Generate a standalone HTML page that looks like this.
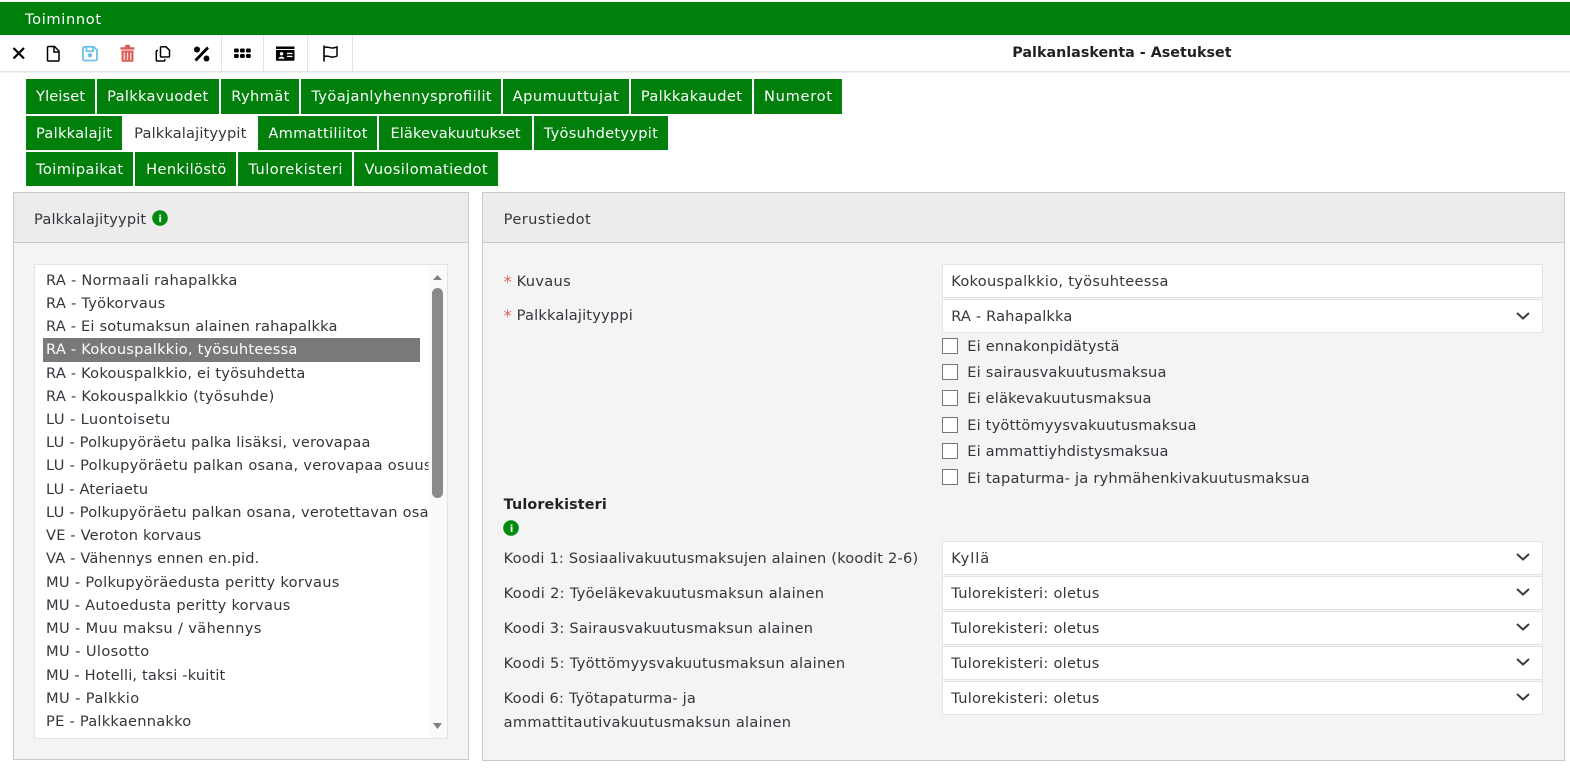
<!DOCTYPE html>
<html lang="fi"><head><meta charset="utf-8"><title>Palkanlaskenta - Asetukset</title>
<style>
html,body{margin:0;padding:0;background:#fff;width:1570px;height:772px;overflow:hidden}
svg{display:block}
text{font-family:"DejaVu Sans","Liberation Sans",sans-serif;font-size:14.600px;fill:#33363b;white-space:pre}
.w text{fill:#fff}
.b{font-weight:bold;fill:#1f2124;font-size:14.300px}
.tab{fill:#007f0b}
.inp{fill:#fff;stroke:#e1e4ea;stroke-width:1}
.chk{fill:#fff;stroke:#767676;stroke-width:1}
.chev{fill:none;stroke:#3a3d42;stroke-width:2}
.sep{fill:#e2e3e6}
</style></head><body>
<svg width="1570" height="772" viewBox="0 0 1570 772" xmlns="http://www.w3.org/2000/svg">
<defs><clipPath id="lc"><rect x="35" y="265" width="393" height="473"/></clipPath></defs>
<rect width="1570" height="772" fill="#fff"/>
<rect x="0" y="2" width="1570" height="33" fill="#007f0b"/>

<!-- toolbar -->
<rect x="0" y="71" width="1570" height="1.500" fill="#e2e3e6"/>
<rect class="sep" x="221" y="35" width="1" height="36"/>
<rect class="sep" x="263" y="35" width="1" height="36"/>
<rect class="sep" x="307" y="35" width="1" height="36"/>
<rect class="sep" x="352" y="35" width="1" height="36"/>
<path d="M13.500 48L24 58.500M24 48L13.500 58.500" stroke="#000" stroke-width="2.200" fill="none"/>
<path d="M48.500 46.500h6l4.500 4.500v9a1 1 0 0 1-1 1h-9.500a1 1 0 0 1-1-1v-12.500a1 1 0 0 1 1-1zM54 47v5h5" fill="none" stroke="#000" stroke-width="1.500"/>
<path d="M84.500 46.800h9.200l3.300 3.300v8.900a1.500 1.500 0 0 1-1.500 1.500h-11a1.500 1.500 0 0 1-1.500-1.500v-10.700a1.500 1.500 0 0 1 1.500-1.500zM86.500 47v4.200h6.500v-4.200" fill="none" stroke="#6cc3e6" stroke-width="1.800"/><circle cx="90" cy="55.300" r="2.200" fill="#6cc3e6"/>
<path d="M120.500 47.200h14v2.400h-14zM124.500 47.500l1-2.800h4l1 2.800z" fill="#dc5f58"/><path d="M121.500 50.500h12v10a1.300 1.300 0 0 1-1.300 1.300h-9.400a1.300 1.300 0 0 1-1.300-1.300z" fill="#dc5f58"/><path d="M124.300 52.500v7.500M127.500 52.500v7.500M130.700 52.500v7.500" stroke="#f7d9d6" stroke-width="1.300"/>
<path d="M161.500 46.800h4.500l3.500 3.500v5.700a1 1 0 0 1-1 1h-7a1 1 0 0 1-1-1v-8.200a1 1 0 0 1 1-1z" fill="none" stroke="#000" stroke-width="1.500"/><path d="M158 50.500h-.7a1 1 0 0 0-1 1v8.500a1 1 0 0 0 1 1h6.500a1 1 0 0 0 1-1v-1" fill="none" stroke="#000" stroke-width="1.500"/>
<path d="M195.500 60.500L208 47.500" stroke="#000" stroke-width="2.800" fill="none"/><circle cx="197" cy="49.500" r="3" fill="#000"/><circle cx="206.500" cy="58.500" r="3" fill="#000"/>
<g fill="#000"><rect x="234" y="48.500" width="4.800" height="4" rx="1.200"/><rect x="240" y="48.500" width="4.800" height="4" rx="1.200"/><rect x="246" y="48.500" width="4.800" height="4" rx="1.200"/><rect x="234" y="54" width="4.800" height="4" rx="1.200"/><rect x="240" y="54" width="4.800" height="4" rx="1.200"/><rect x="246" y="54" width="4.800" height="4" rx="1.200"/></g>
<path d="M276 46.500h18.500v2.500h-18.500z" fill="#000"/><path d="M276 50h18.500v10a.8.8 0 0 1-.8.8h-16.900a.8.8 0 0 1-.8-.8z" fill="#000"/><circle cx="281.500" cy="53.800" r="1.700" fill="#fff"/><path d="M278.500 58.700c.3-2.800 5.700-2.800 6 0zM287 52.800h5.500v1.300h-5.500zM287 55.800h5.500v1.300h-5.500z" fill="#fff"/>
<path d="M324 45.500v16" stroke="#000" stroke-width="1.600"/><path d="M324.500 47.500c3.500-1.500 5.500 1 8.500.5 1.500-.2 2.500-.5 4-1v9c-1.500.7-2.800 1-4.200 1.100-3 .2-5-2-8.300-.6" fill="none" stroke="#000" stroke-width="1.500"/>

<!-- tabs -->
<g class="tab">
<rect x="26" y="79" width="69" height="35"/><rect x="97" y="79" width="122" height="35"/><rect x="221" y="79" width="78" height="35"/><rect x="301" y="79" width="200" height="35"/><rect x="503" y="79" width="126" height="35"/><rect x="631" y="79" width="121" height="35"/><rect x="754" y="79" width="88" height="35"/>
<rect x="26" y="116" width="96" height="34"/><rect x="258" y="116" width="119" height="34"/><rect x="379" y="116" width="153" height="34"/><rect x="534" y="116" width="134" height="34"/>
<rect x="26" y="152" width="107" height="34"/><rect x="135" y="152" width="101" height="34"/><rect x="238" y="152" width="114" height="34"/><rect x="354" y="152" width="144" height="34"/>
</g>

<!-- left panel -->
<rect x="13.500" y="192.500" width="455" height="567" fill="#f4f4f5" stroke="#c9c9c9"/>
<rect x="14" y="193" width="454" height="49" fill="#ececec"/><rect x="14" y="242" width="454" height="1" fill="#c9c9c9"/>
<circle cx="160" cy="218" r="7.800" fill="#008a0e"/>
<rect x="34.500" y="264.500" width="413" height="474" fill="#fff" stroke="#e1e4ea"/>
<rect x="428" y="265" width="19" height="473" fill="#fafafa"/>
<path d="M433 280l4.500-5 4.500 5zM433 723h9l-4.500 6z" fill="#7f7f7f"/>
<rect x="432" y="288" width="11" height="210" rx="5.500" fill="#8a8a8a"/>
<rect x="43" y="338" width="377" height="24" fill="#797979"/>

<!-- right panel -->
<rect x="482.500" y="192.500" width="1082" height="568" fill="#f4f4f5" stroke="#c9c9c9"/>
<rect x="483" y="193" width="1081" height="49" fill="#ececec"/><rect x="483" y="242" width="1081" height="1" fill="#c9c9c9"/>
<circle cx="511" cy="528" r="7.800" fill="#008a0e"/>

<rect class="inp" x="942.500" y="264.500" width="600" height="33"/>
<rect class="inp" x="942.500" y="299.500" width="600" height="33"/>
<path class="chev" d="M1517 313l6 5.500 6-5.500"/>
<rect class="chk" x="942.500" y="338.500" width="15" height="15"/>
<rect class="chk" x="942.500" y="364.500" width="15" height="15"/>
<rect class="chk" x="942.500" y="390.500" width="15" height="15"/>
<rect class="chk" x="942.500" y="417.500" width="15" height="15"/>
<rect class="chk" x="942.500" y="443.500" width="15" height="15"/>
<rect class="chk" x="942.500" y="469.500" width="15" height="15"/>
<rect class="inp" x="942.500" y="541.500" width="600" height="33"/><path class="chev" d="M1517 554l6 5.500 6-5.500"/>
<rect class="inp" x="942.500" y="576.500" width="600" height="33"/><path class="chev" d="M1517 589l6 5.500 6-5.500"/>
<rect class="inp" x="942.500" y="611.500" width="600" height="33"/><path class="chev" d="M1517 624l6 5.500 6-5.500"/>
<rect class="inp" x="942.500" y="646.500" width="600" height="33"/><path class="chev" d="M1517 659l6 5.500 6-5.500"/>
<rect class="inp" x="942.500" y="681.500" width="600" height="33"/><path class="chev" d="M1517 694l6 5.500 6-5.500"/>

<!-- text -->
<g transform="scale(1.00128,1)">
<g class="w"><text x="25" y="24" textLength="76">Toiminnot</text></g>
<text class="b" x="1011" y="57" textLength="219">Palkanlaskenta - Asetukset</text>
<g class="w">
<text x="36" y="101" textLength="49">Yleiset</text><text x="107" y="101" textLength="101">Palkkavuodet</text><text x="231" y="101" textLength="58">Ryhmät</text><text x="311" y="101" textLength="180">Työajanlyhennysprofiilit</text><text x="512" y="101" textLength="106">Apumuuttujat</text><text x="640" y="101" textLength="101">Palkkakaudet</text><text x="763" y="101" textLength="68">Numerot</text>
<text x="36" y="138" textLength="76">Palkkalajit</text><text x="268" y="138" textLength="99">Ammattiliitot</text><text x="390" y="138" textLength="130">Eläkevakuutukset</text><text x="543" y="138" textLength="114">Työsuhdetyypit</text>
<text x="36" y="174" textLength="87">Toimipaikat</text><text x="146" y="174" textLength="80">Henkilöstö</text><text x="248" y="174" textLength="94">Tulorekisteri</text><text x="364" y="174" textLength="123">Vuosilomatiedot</text>
</g>
<text x="134" y="138" textLength="112">Palkkalajityypit</text>
<text x="34" y="224" textLength="112">Palkkalajityypit</text>
<text x="160" y="222" text-anchor="middle" style="font-size:10px;font-weight:bold;fill:#fff">i</text>
<g clip-path="url(#lc)">
<text x="46" y="285" textLength="191">RA - Normaali rahapalkka</text>
<text x="46" y="308" textLength="119">RA - Työkorvaus</text>
<text x="46" y="331" textLength="291">RA - Ei sotumaksun alainen rahapalkka</text>
<text x="46" y="354" textLength="251" style="fill:#fff">RA - Kokouspalkkio, työsuhteessa</text>
<text x="46" y="378" textLength="259">RA - Kokouspalkkio, ei työsuhdetta</text>
<text x="46" y="401" textLength="228">RA - Kokouspalkkio (työsuhde)</text>
<text x="46" y="424" textLength="124">LU - Luontoisetu</text>
<text x="46" y="447" textLength="324">LU - Polkupyöräetu palka lisäksi, verovapaa</text>
<text x="46" y="470" textLength="385">LU - Polkupyöräetu palkan osana, verovapaa osuus</text>
<text x="46" y="494" textLength="102">LU - Ateriaetu</text>
<text x="46" y="517" textLength="382">LU - Polkupyöräetu palkan osana, verotettavan osa</text>
<text x="46" y="540" textLength="155">VE - Veroton korvaus</text>
<text x="46" y="563" textLength="213">VA - Vähennys ennen en.pid.</text>
<text x="46" y="587" textLength="293">MU - Polkupyöräedusta peritty korvaus</text>
<text x="46" y="610" textLength="244">MU - Autoedusta peritty korvaus</text>
<text x="46" y="633" textLength="215">MU - Muu maksu / vähennys</text>
<text x="46" y="656" textLength="103">MU - Ulosotto</text>
<text x="46" y="680" textLength="179">MU - Hotelli, taksi -kuitit</text>
<text x="46" y="703" textLength="93">MU - Palkkio</text>
<text x="46" y="726" textLength="145">PE - Palkkaennakko</text>
</g>
<text x="503" y="224" textLength="87">Perustiedot</text>
<text x="503" y="287" style="fill:#dc5f58;font-size:16px">*</text><text x="516" y="286" textLength="54">Kuvaus</text>
<text x="503" y="321" style="fill:#dc5f58;font-size:16px">*</text><text x="516" y="320" textLength="116">Palkkalajityyppi</text>
<text x="950" y="286" textLength="217">Kokouspalkkio, työsuhteessa</text>
<text x="950" y="321" textLength="121">RA - Rahapalkka</text>
<text x="966" y="351" textLength="152">Ei ennakonpidätystä</text>
<text x="966" y="377" textLength="199">Ei sairausvakuutusmaksua</text>
<text x="966" y="403" textLength="184">Ei eläkevakuutusmaksua</text>
<text x="966" y="430" textLength="229">Ei työttömyysvakuutusmaksua</text>
<text x="966" y="456" textLength="201">Ei ammattiyhdistysmaksua</text>
<text x="966" y="483" textLength="342">Ei tapaturma- ja ryhmähenkivakuutusmaksua</text>
<text class="b" x="503" y="509" textLength="103">Tulorekisteri</text>
<text x="511" y="532" text-anchor="middle" style="font-size:10px;font-weight:bold;fill:#fff">i</text>
<text x="503" y="563" textLength="414">Koodi 1: Sosiaalivakuutusmaksujen alainen (koodit 2-6)</text>
<text x="503" y="598" textLength="320">Koodi 2: Työeläkevakuutusmaksun alainen</text>
<text x="503" y="633" textLength="309">Koodi 3: Sairausvakuutusmaksun alainen</text>
<text x="503" y="668" textLength="341">Koodi 5: Työttömyysvakuutusmaksun alainen</text>
<text x="503" y="703" textLength="192">Koodi 6: Työtapaturma- ja</text>
<text x="503" y="727" textLength="287">ammattitautivakuutusmaksun alainen</text>
<text x="950" y="563" textLength="38">Kyllä</text>
<text x="950" y="598" textLength="148">Tulorekisteri: oletus</text>
<text x="950" y="633" textLength="148">Tulorekisteri: oletus</text>
<text x="950" y="668" textLength="148">Tulorekisteri: oletus</text>
<text x="950" y="703" textLength="148">Tulorekisteri: oletus</text>
</g>
</svg>
</body></html>
